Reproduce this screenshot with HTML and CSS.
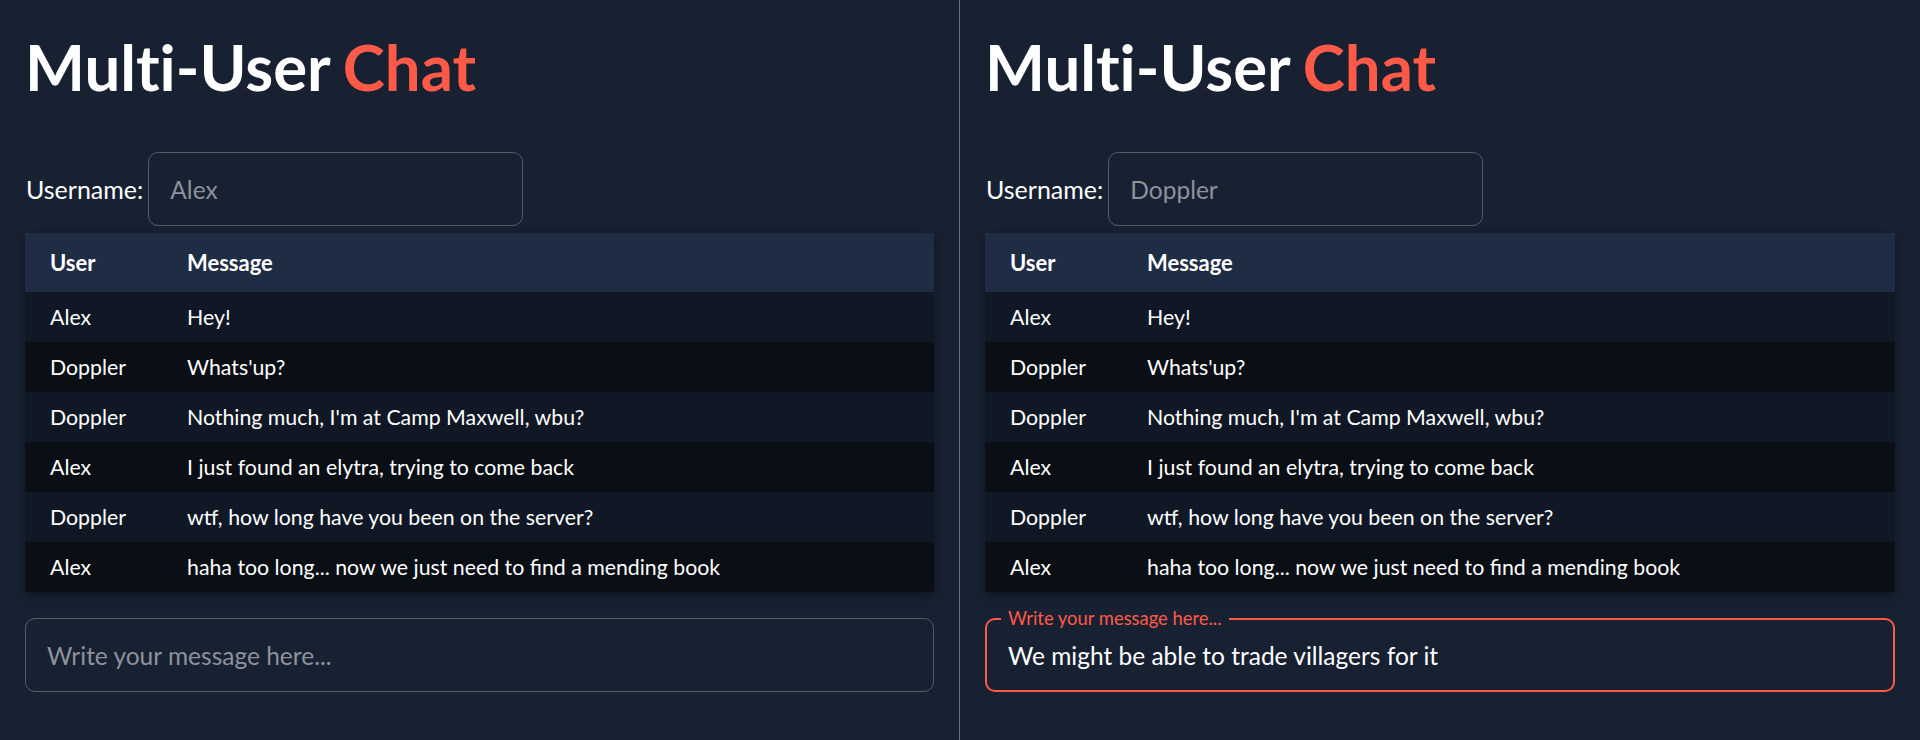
FILE: index.html
```html
<!DOCTYPE html>
<html lang="en">
<head>
<meta charset="utf-8">
<title>Multi-User Chat</title>
<link rel="stylesheet" href="styles.css">
</head>
<body>
<div class="app">
  <section class="panel panel-left">
    <h1 class="title">Multi-User <span class="accent">Chat</span></h1>
    <div class="user-row">
      <label class="user-label" for="u1">Username:</label>
      <input class="user-input" id="u1" type="text" placeholder="Alex">
    </div>
    <table class="chat">
      <thead>
        <tr><th class="col-user">User</th><th>Message</th></tr>
      </thead>
      <tbody>
        <tr><td>Alex</td><td>Hey!</td></tr>
        <tr><td>Doppler</td><td>Whats'up?</td></tr>
        <tr><td>Doppler</td><td>Nothing much, I'm at Camp Maxwell, wbu?</td></tr>
        <tr><td>Alex</td><td>I just found an elytra, trying to come back</td></tr>
        <tr><td>Doppler</td><td>wtf, how long have you been on the server?</td></tr>
        <tr><td>Alex</td><td>haha too long... now we just need to find a mending book</td></tr>
      </tbody>
    </table>
    <div class="compose">
      <input class="compose-input" type="text" placeholder="Write your message here...">
    </div>
  </section>
  <section class="panel">
    <h1 class="title">Multi-User <span class="accent">Chat</span></h1>
    <div class="user-row">
      <label class="user-label" for="u2">Username:</label>
      <input class="user-input" id="u2" type="text" placeholder="Doppler">
    </div>
    <table class="chat">
      <thead>
        <tr><th class="col-user">User</th><th>Message</th></tr>
      </thead>
      <tbody>
        <tr><td>Alex</td><td>Hey!</td></tr>
        <tr><td>Doppler</td><td>Whats'up?</td></tr>
        <tr><td>Doppler</td><td>Nothing much, I'm at Camp Maxwell, wbu?</td></tr>
        <tr><td>Alex</td><td>I just found an elytra, trying to come back</td></tr>
        <tr><td>Doppler</td><td>wtf, how long have you been on the server?</td></tr>
        <tr><td>Alex</td><td>haha too long... now we just need to find a mending book</td></tr>
      </tbody>
    </table>
    <div class="compose compose-focused">
      <span class="float-label">Write your message here...</span>
      <input class="compose-input" type="text" value="We might be able to trade villagers for it">
    </div>
  </section>
</div>
</body>
</html>
```
FILE: styles.css
```css
* { box-sizing: border-box; }
html, body {
  margin: 0;
  padding: 0;
  background: #172132;
  color: #ffffff;
  font-family: Lato, "Liberation Sans", sans-serif;
}
.app {
  display: flex;
  width: 1920px;
  height: 740px;
}
.panel {
  width: 960px;
  flex: 0 0 960px;
  padding: 0 25px;
  background: #172132;
}
.panel-left {
  border-right: 1px solid #6a6e75;
}
.title {
  margin: 28px 0 0;
  font-size: 63.5px;
  line-height: 77px;
  font-weight: 700;
  color: #ffffff;
  word-spacing: -2px;
  font-variant-ligatures: no-common-ligatures;
}
.accent { color: #ff5a48; }
.user-row {
  display: flex;
  align-items: center;
  gap: 5px;
  margin-top: 47px;
}
.user-label {
  font-size: 25px;
  color: #ffffff;
  padding-left: 1px;
}
.user-input {
  width: 375px;
  height: 74px;
  border: 1px solid #555c68;
  border-radius: 10px;
  background: transparent;
  padding: 0 21px;
  font-family: Lato, "Liberation Sans", sans-serif;
  font-size: 24.5px;
  color: #ffffff;
  outline: none;
}
.user-input::placeholder { color: #8d929b; }
.chat {
  width: 100%;
  margin-top: 7px;
  border-collapse: collapse;
  box-shadow: 0 4px 8px rgba(0, 0, 0, 0.35);
}
.chat th {
  height: 59px;
  padding: 0 25px;
  text-align: left;
  font-size: 22px;
  font-weight: 700;
  background: #1f2d44;
}
.chat th.col-user { width: 137px; }
.chat td {
  height: 50px;
  padding: 0 25px;
  font-size: 21.3px;
}
.chat tbody tr:nth-child(odd) td { background: #111825; }
.chat tbody tr:nth-child(even) td { background: #0a0e15; }
.compose {
  margin-top: 26px;
  height: 74px;
  border: 1px solid #555c68;
  border-radius: 10px;
  display: flex;
  align-items: center;
  padding: 0 21px;
}
.compose-focused {
  position: relative;
  border: 2px solid #ff5a48;
}
.float-label {
  position: absolute;
  top: -12px;
  left: 14px;
  padding: 0 7px;
  background: #172132;
  font-size: 18.4px;
  line-height: 20px;
  color: #ff5a48;
}
.compose-input {
  width: 100%;
  border: none;
  background: transparent;
  padding: 0;
  font-family: Lato, "Liberation Sans", sans-serif;
  font-size: 24.5px;
  color: #ffffff;
  outline: none;
}
.compose-input::placeholder { color: #8d929b; }
```
